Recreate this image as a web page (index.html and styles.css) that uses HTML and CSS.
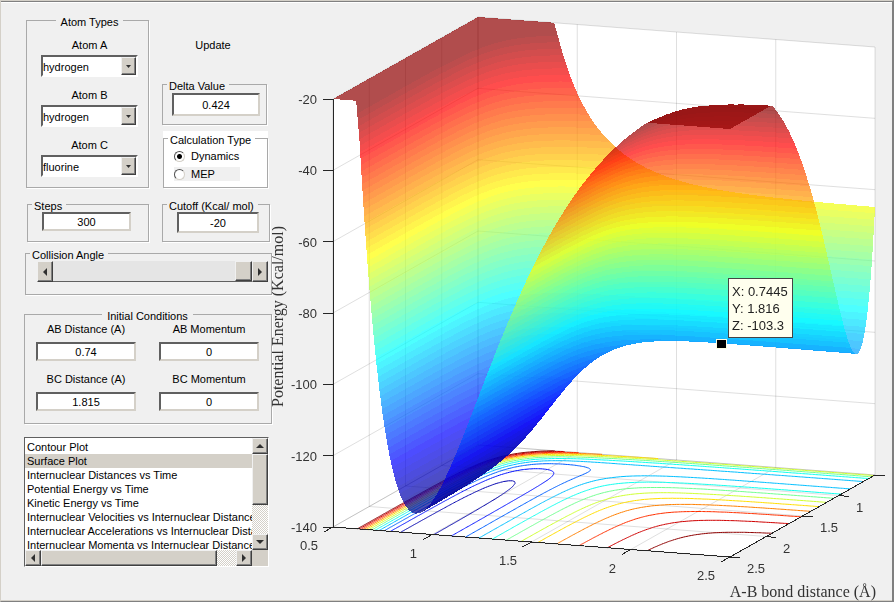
FILE: index.html
```html
<!DOCTYPE html>
<html lang="en">
<head>
    <meta charset="UTF-8">
    <meta name="viewport" content="width=device-width, initial-scale=1.0">
    <title>Potential Energy Surface</title>
    <link rel="stylesheet" href="styles.css">
</head>
<body>
    <div class="window">
        <form class="controls" id="controls">
            <div class="row">
                <fieldset class="atoms centered">
                    <legend>Atom Types</legend>
                    <label for="atomA">Atom A</label>
                    <div class="combo">
                        <select id="atomA"><option>hydrogen</option><option>fluorine</option></select>
                        <span class="drop"><svg width="5" height="3"><path d="M0 0h5L2.500 3z"/></svg></span>
                    </div>
                    <label for="atomB">Atom B</label>
                    <div class="combo">
                        <select id="atomB"><option>hydrogen</option><option>fluorine</option></select>
                        <span class="drop"><svg width="5" height="3"><path d="M0 0h5L2.500 3z"/></svg></span>
                    </div>
                    <label for="atomC">Atom C</label>
                    <div class="combo">
                        <select id="atomC"><option>fluorine</option><option>hydrogen</option></select>
                        <span class="drop"><svg width="5" height="3"><path d="M0 0h5L2.500 3z"/></svg></span>
                    </div>
                </fieldset>

                <div class="side">
                    <button type="button" class="update">Update</button>
                    <fieldset class="delta">
                        <legend>Delta Value</legend>
                        <div class="field"><input type="text" aria-label="Delta Value" value="0.424"></div>
                    </fieldset>
                    <div class="white">
                        <fieldset class="calc">
                            <legend>Calculation Type</legend>
                            <label><input type="radio" name="calc" checked>Dynamics</label>
                            <label class="shaded"><input type="radio" name="calc">MEP</label>
                        </fieldset>
                    </div>
                </div>
            </div>

            <div class="row">
                <fieldset class="steps">
                    <legend>Steps</legend>
                    <div class="field"><input type="text" aria-label="Steps" value="300"></div>
                </fieldset>
                <fieldset class="cutoff">
                    <legend>Cutoff (Kcal/ mol)</legend>
                    <div class="field"><input type="text" aria-label="Cutoff" value="-20"></div>
                </fieldset>
            </div>

            <fieldset class="angle">
                <legend>Collision Angle</legend>
                <div class="slider">
                    <button type="button" class="arrow" aria-label="Decrease"><svg width="4" height="8"><path d="M4 0v8L0 4z"/></svg></button>
                    <input type="range" aria-label="Collision Angle" min="0" max="180" value="180">
                    <button type="button" class="arrow" aria-label="Increase"><svg width="4" height="8"><path d="M0 0v8l4-4z"/></svg></button>
                </div>
            </fieldset>

            <fieldset class="initial centered">
                <legend>Initial Conditions</legend>
                <div class="pairs">
                    <div><label for="abDist">AB Distance (A)</label><input type="text" id="abDist" value="0.74"></div>
                    <div><label for="abMom">AB Momentum</label><input type="text" id="abMom" value="0"></div>
                    <div><label for="bcDist">BC Distance (A)</label><input type="text" id="bcDist" value="1.815"></div>
                    <div><label for="bcMom">BC Momentum</label><input type="text" id="bcMom" value="0"></div>
                </div>
            </fieldset>

            <div class="listbox">
                <select size="8" aria-label="Plot type">
                    <option>Contour Plot</option>
                    <option selected>Surface Plot</option>
                    <option>Internuclear Distances vs Time</option>
                    <option>Potential Energy vs Time</option>
                    <option>Kinetic Energy vs Time</option>
                    <option>Internuclear Velocities vs Internuclear Distance</option>
                    <option>Internuclear Accelerations vs Internuclear Distance</option>
                    <option>Internuclear Momenta vs Internuclear Distance</option>
                </select>
                <div class="scroll vertical">
                    <button type="button" class="arrow" aria-label="Scroll up"><svg width="8" height="4"><path d="M0 4h8L4 0z"/></svg></button>
                    <span class="thumb"></span>
                    <button type="button" class="arrow" aria-label="Scroll down"><svg width="8" height="4"><path d="M0 0h8L4 4z"/></svg></button>
                </div>
                <div class="scroll horizontal">
                    <button type="button" class="arrow" aria-label="Scroll left"><svg width="4" height="8"><path d="M4 0v8L0 4z"/></svg></button>
                    <span class="thumb"></span>
                    <button type="button" class="arrow" aria-label="Scroll right"><svg width="4" height="8"><path d="M0 0v8l4-4z"/></svg></button>
                </div>
            </div>
        </form>

        <svg class="plot" viewBox="272 1 620 600">
            <path class="walls" d="M333 99L478 17L875 47V475L730 557L333 527Z"/>
            <g id="grid"></g>
            <g id="contours"></g>
            <g id="axes"></g>
            <foreignObject x="272" y="1" width="620" height="600">
                <canvas id="surface" width="620" height="600"></canvas>
            </foreignObject>
            <g id="ticks"></g>
            <text class="title" transform="translate(283 407) rotate(-90)">Potential Energy (Kcal/mol)</text>
            <text class="title" x="876" y="597" text-anchor="end">A-B bond distance (Å)</text>
            <g class="datatip">
                <rect class="marker" x="716.500" y="339.500" width="10" height="9"/>
                <rect class="tip" x="728.500" y="278.500" width="64" height="59"/>
                <text x="732" y="296">X: 0.7445</text>
                <text x="732" y="313">Y: 1.816</text>
                <text x="732" y="330">Z: -103.3</text>
            </g>
        </svg>
    </div>
    <script src="plot.js"></script>
</body>
</html>
```

FILE: styles.css
```css
body {
    margin: 0;
    background-color: #f0f0f0;
    font-family: 'Liberation Sans', Arial, sans-serif;
    font-size: 11px;
    line-height: 12px;
    color: #000;
}
.window {
    display: grid;
    grid-template-columns: 271px 1fr;
    align-items: start;
    min-height: 100vh;
    box-sizing: border-box;
    border: 1px solid #d4d0c8;
    border-right: 2px solid #808080;
    border-bottom-color: #808080;
    box-shadow: inset 0 1px #808080, inset 0 2px #fff, inset 0 -1px #d4d0c8;
}
.controls {
    padding: 12px 0 0 23px;
}
.row {
    display: grid;
    grid-template-columns: 125px 108px;
    column-gap: 13px;
    margin-bottom: 9px;
}
.row + .row {
    margin-bottom: 4px;
}
fieldset {
    margin: 0;
    min-width: 0;
    border: 1px solid #a9a9a9;
    box-shadow: 1px 1px #fff;
    padding: 0;
    box-sizing: border-box;
}
legend {
    margin-left: 4px;
    padding: 3px 4px 0 2px;
    line-height: 12px;
    white-space: nowrap;
}
.centered legend {
    margin: 0 auto;
    padding: 3px 5px 0;
}
select, input, button {
    font: inherit;
    color: inherit;
    margin: 0;
    border-radius: 0;
}
input[type="text"] {
    display: block;
    box-sizing: border-box;
    width: 100%;
    height: 19px;
    padding: 0;
    text-align: center;
    background-color: #fff;
    border: 2px solid;
    border-color: #606060 #d4d0c8 #d4d0c8 #606060;
    outline: none;
}

/* atom types */
.atoms {
    margin-left: 2px;
    padding: 11px 10px 10px 14px;
}
.atoms label {
    display: block;
    text-align: center;
    margin-bottom: 4px;
}
.combo {
    display: flex;
    height: 22px;
    box-sizing: border-box;
    border: 2px solid;
    border-color: #606060 #fff #fff #606060;
    background-color: #fff;
    margin-bottom: 12px;
}
.combo:last-child {
    margin-bottom: 0;
}
.combo select {
    appearance: none;
    flex: 1;
    min-width: 0;
    border: none;
    padding: 2px 0 0;
    background: none;
    outline: none;
}
.drop, .arrow, .thumb {
    display: flex;
    align-items: center;
    justify-content: center;
    box-sizing: border-box;
    padding: 0;
    background-color: #d4d0c8;
    border: 1px solid;
    border-color: #f0f0f0 #404040 #404040 #f0f0f0;
    box-shadow: inset -1px -1px #808080;
}
.drop {
    flex: none;
    width: 15px;
}
svg {
    flex: none;
}
.drop path, .arrow path {
    fill: #303030;
}

/* right column */
.side {
    display: flex;
    flex-direction: column;
}
.update {
    border: none;
    background: none;
    padding: 0;
    height: 14px;
    margin: 25px 6px 25px 0;
}
.delta {
    margin-right: 3px;
    padding: 1px 0 8px;
}
.delta .field {
    margin: 0 6px 0 9px;
}
.delta input {
    height: 23px;
}
.white {
    margin: 6px 2px 0 1px;
    background-color: #fff;
}
.calc {
    padding: 3px 0 6px;
}
.calc label {
    display: flex;
    align-items: center;
    height: 14px;
    width: 66px;
    margin: 0 0 4px 10px;
}
.calc label:last-child {
    margin-bottom: 0;
}
.calc .shaded {
    background-color: #f0f0f0;
}
.calc input {
    appearance: none;
    box-sizing: border-box;
    width: 11px;
    height: 11px;
    margin-right: 6px;
    border: 1px solid;
    border-color: #505050 #d4d0c8 #d4d0c8 #505050;
    border-radius: 50%;
    background-color: #fff;
}
.calc input:checked {
    background-image: radial-gradient(#000 2px, #fff 3px);
}

.steps {
    margin-left: 3px;
    padding-bottom: 10px;
}
.steps .field {
    margin: 0 17px 0 14px;
}
.cutoff {
    padding-bottom: 8px;
}
.cutoff .field {
    margin: 0 10px 0 14px;
}
.cutoff input {
    height: 21px;
}

/* collision angle */
.angle {
    margin-left: 1px;
    margin-bottom: 12px;
    padding-bottom: 12px;
}
.slider {
    display: flex;
    height: 21px;
    margin: 0 3px 0 11px;
}
.slider .arrow {
    width: 16px;
}
.slider input {
    appearance: none;
    flex: 1;
    min-width: 0;
    background-color: #e5e5e5;
    border-bottom: 1px solid #606060;
    box-sizing: border-box;
    height: 21px;
}
.slider input::-webkit-slider-thumb {
    appearance: none;
    box-sizing: border-box;
    width: 17px;
    height: 20px;
    background-color: #d4d0c8;
    border: 1px solid;
    border-color: #f0f0f0 #404040 #404040 #f0f0f0;
    box-shadow: inset -1px -1px #808080;
}

/* initial conditions */
.initial {
    margin-bottom: 13px;
    padding: 1px 12px 12px 11px;
}
.pairs {
    display: grid;
    grid-template-columns: 100px 100px;
    justify-content: space-between;
    row-gap: 12px;
}
.pairs label {
    display: block;
    text-align: center;
    margin-bottom: 7px;
}

/* plot list */
.listbox {
    display: grid;
    grid-template-columns: 1fr 16px;
    grid-template-rows: 112px 16px;
    box-sizing: border-box;
    width: 245px;
    background-color: #d4d0c8;
    border: 1px solid #606060;
    border-right-color: #fff;
    border-bottom-color: #fff;
}
.listbox > select {
    min-width: 0;
    height: 112px;
    padding: 2px 0 0;
    border: none;
    background-color: #fff;
    overflow: hidden;
    outline: none;
}
.listbox option {
    box-sizing: border-box;
    height: 14px;
    min-height: 14px;
    padding: 1px 0 0 2px;
    line-height: 13px;
    font-size: 11px;
}
.listbox option:checked {
    color: #000;
    background: linear-gradient(#d4d0c8, #d4d0c8);
}
.scroll {
    display: flex;
    background: repeating-conic-gradient(#fff 0 25%, #d4d0c8 0 50%) 0 0 / 2px 2px;
}
.scroll .arrow {
    width: 16px;
    height: 16px;
    flex: none;
}
.vertical {
    flex-direction: column;
}
.vertical .thumb {
    height: 51px;
}
.vertical .arrow:last-child {
    margin-top: auto;
}
.horizontal .thumb {
    width: 176px;
}
.horizontal .arrow:last-child {
    margin-left: auto;
}

/* plot */
.plot {
    display: block;
    width: 100%;
    overflow: hidden;
    font-size: 13px;
}
.plot canvas {
    display: block;
}
.plot .walls {
    fill: #fff;
}
#grid path {
    fill: none;
    stroke: #262626;
    stroke-opacity: 0.15;
}
#axes path {
    fill: none;
    stroke: #262626;
    shape-rendering: crispEdges;
}
#contours path {
    fill: none;
    stroke-linejoin: round;
}
#ticks text {
    fill: #333;
}
.title {
    font-family: 'Liberation Serif', 'Times New Roman', serif;
    font-size: 16px;
    fill: #333;
}
.marker {
    fill: #000;
    stroke: #ffffe0;
}
.tip {
    fill: #ffffee;
    stroke: #444;
}
.datatip text {
    fill: #222;
}
```

FILE: plot.js
```js
// LEPS potential for collinear F + H2, distances in angstrom, energy in kcal/mol
const HH = { D: 103.3, beta: 1.97, re: 0.7414 };
const HF = { D: 134.6, beta: 2.2187, re: 0.917 };
const SATO = 0.18;
const CUTOFF = -20;
const ZMIN = -134.6;

function pair(m, r) {
    const e = Math.exp(-m.beta * (r - m.re));
    const singlet = m.D * (e * e - 2 * e);
    const triplet = m.D / 2 * (e * e + 2 * e) * (1 - SATO) / (1 + SATO);
    return [(singlet + triplet) / 2, (singlet - triplet) / 2];
}

function energy(bc, ab) {
    const [q1, j1] = pair(HF, bc);
    const [q2, j2] = pair(HH, ab);
    const [q3, j3] = pair(HF, bc + ab);
    return q1 + q2 + q3 - Math.sqrt(((j1 - j2) ** 2 + (j2 - j3) ** 2 + (j1 - j3) ** 2) / 2);
}

function project(bc, ab, z) {
    const p = bc - 0.5, q = ab - 0.5;
    return [478 + 198.5 * p - 72.5 * q, 445 + 15 * p + 41 * q - (z + 140) * 428 / 120];
}

function jet(z) {
    let i = Math.floor((z - ZMIN) / (CUTOFF - ZMIN) * 64);
    i = Math.max(1, Math.min(63, i + 1));
    const c = k => Math.max(0, Math.min(1, 1.5 - Math.abs(i / 16 - k))) * 255;
    return [c(3), c(2), c(1)];
}

const SVG = 'http://www.w3.org/2000/svg';
function addPath(id, d, color) {
    const el = document.createElementNS(SVG, 'path');
    el.setAttribute('d', d);
    if (color) el.setAttribute('stroke', color);
    document.getElementById(id).appendChild(el);
}
function addText(x, y, value, anchor) {
    const el = document.createElementNS(SVG, 'text');
    el.setAttribute('x', x);
    el.setAttribute('y', y);
    el.setAttribute('text-anchor', anchor);
    el.textContent = value;
    document.getElementById('ticks').appendChild(el);
}
const line = (...pts) => 'M' + pts.map(p => p.join(' ')).join('L');

// grid and axes
for (let v = 0.5; v <= 2.5; v += 0.5) {
    addPath('grid', line(project(0.5, v, -20), project(0.5, v, -140), project(2.5, v, -140)));
    addPath('grid', line(project(v, 0.5, -20), project(v, 0.5, -140), project(v, 2.5, -140)));

    const [fx, fy] = project(v, 2.5, -140);
    addPath('axes', line([fx, fy], [fx - 9, fy + 5]));
    addText(Math.round(fx) - 15, Math.round(fy) + 23, v, 'end');

    const [rx, ry] = project(2.5, v, -140);
    addPath('axes', line([rx, ry], [rx + 10, ry + 1]));
    if (v > 0.5) addText(Math.round(rx) + 17, Math.round(ry) + 16, v, 'start');
}
for (let z = -140; z <= -20; z += 20) {
    addPath('grid', line(project(0.5, 2.5, z), project(0.5, 0.5, z), project(2.5, 0.5, z)));
    const [x, y] = project(0.5, 2.5, z);
    addPath('axes', line([x - 10, y], [x, y]));
    addText(x - 16, Math.round(y) + 5, z, 'end');
}
addPath('axes', line([333, 99], [333, 527], [730, 557], [875, 475]));

// sample the surface
const N = 120;
const raw = [];
for (let j = 0; j <= N; j++) {
    raw.push([]);
    for (let i = 0; i <= N; i++) {
        raw[j].push(energy(0.5 + 2 * i / N, 0.5 + 2 * j / N));
    }
}

// contours on the floor, marching over triangles
for (let level = -130; level <= -20; level += 10) {
    let d = '';
    for (let j = 0; j < N; j++) {
        for (let i = 0; i < N; i++) {
            for (const tri of [[[i, j], [i + 1, j], [i, j + 1]], [[i + 1, j], [i + 1, j + 1], [i, j + 1]]]) {
                const hits = [];
                for (let k = 0; k < 3; k++) {
                    const a = tri[k], b = tri[(k + 1) % 3];
                    const va = raw[a[1]][a[0]] - level, vb = raw[b[1]][b[0]] - level;
                    if ((va < 0) !== (vb < 0)) {
                        const t = va / (va - vb);
                        const pt = project(0.5 + 2 * (a[0] + t * (b[0] - a[0])) / N, 0.5 + 2 * (a[1] + t * (b[1] - a[1])) / N, -140);
                        hits.push(pt.map(n => n.toFixed(1)));
                    }
                }
                if (hits.length === 2) d += line(...hits);
            }
        }
    }
    addPath('contours', d, 'rgb(' + jet(level).join(',') + ')');
}

// translucent surface, painted from back to front
const canvas = document.getElementById('surface');
const W = canvas.width, H = canvas.height;
const ALPHA = 0.7;
const buf = new Float32Array(W * H * 4);

function fillTriangle(a, b, c) {
    const det = (b[0] - a[0]) * (c[1] - a[1]) - (c[0] - a[0]) * (b[1] - a[1]);
    if (Math.abs(det) < 1e-9) return;
    const dzx = ((b[2] - a[2]) * (c[1] - a[1]) - (c[2] - a[2]) * (b[1] - a[1])) / det;
    const dzy = ((c[2] - a[2]) * (b[0] - a[0]) - (b[2] - a[2]) * (c[0] - a[0])) / det;
    const top = Math.ceil(Math.min(a[1], b[1], c[1]) - 0.5);
    const bottom = Math.ceil(Math.max(a[1], b[1], c[1]) - 0.5);
    for (let y = Math.max(0, top); y < Math.min(H, bottom); y++) {
        const cy = y + 0.5, xs = [];
        for (let [s, e] of [[a, b], [b, c], [c, a]]) {
            if (s[1] > e[1]) [s, e] = [e, s];
            if (s[1] <= cy && e[1] > cy) xs.push(s[0] + (cy - s[1]) / (e[1] - s[1]) * (e[0] - s[0]));
        }
        if (xs.length < 2) continue;
        const x0 = Math.ceil(Math.min(...xs) - 0.5), x1 = Math.ceil(Math.max(...xs) - 0.5);
        for (let x = Math.max(0, x0); x < Math.min(W, x1); x++) {
            const rgb = jet(a[2] + (x + 0.5 - a[0]) * dzx + (cy - a[1]) * dzy);
            const o = (y * W + x) * 4;
            for (let k = 0; k < 3; k++) buf[o + k] = rgb[k] * ALPHA + buf[o + k] * (1 - ALPHA);
            buf[o + 3] = ALPHA + buf[o + 3] * (1 - ALPHA);
        }
    }
}

function vertex(i, j) {
    const z = Math.min(CUTOFF, raw[j][i]);
    const [x, y] = project(0.5 + 2 * i / N, 0.5 + 2 * j / N, z);
    return [x - 272, y - 1, z];
}
for (let j = 0; j < N; j++) {
    for (let i = 0; i < N; i++) {
        const a = vertex(i, j), b = vertex(i + 1, j), c = vertex(i + 1, j + 1), d = vertex(i, j + 1);
        fillTriangle(a, b, d);
        fillTriangle(b, c, d);
    }
}

const ctx = canvas.getContext('2d');
const image = ctx.createImageData(W, H);
for (let o = 0; o < buf.length; o += 4) {
    const alpha = buf[o + 3];
    if (!alpha) continue;
    for (let k = 0; k < 3; k++) image.data[o + k] = buf[o + k] / alpha;
    image.data[o + 3] = alpha * 255;
}
ctx.putImageData(image, 0, 0);
```
